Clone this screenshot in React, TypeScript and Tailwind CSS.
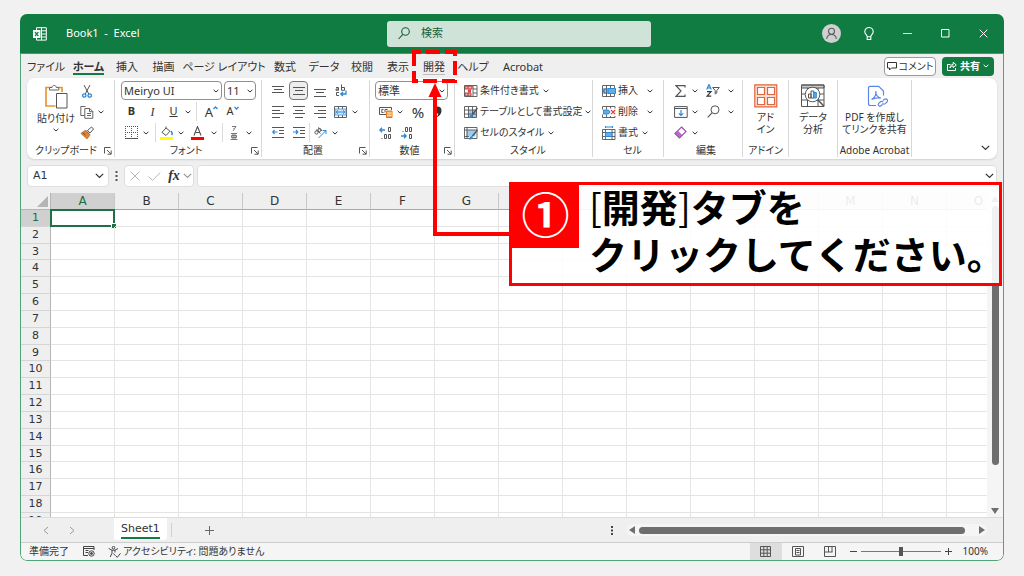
import type { ReactNode } from "react";

const TABS = [
  { name: "ファイル", width: "w-[44px]" },
  { name: "ホーム", width: "w-[41px]" },
  { name: "挿入", width: "w-[36px]" },
  { name: "描画", width: "w-[37px]" },
  { name: "ページ レイアウト", width: "w-[84px]" },
  { name: "数式", width: "w-[38px]" },
  { name: "データ", width: "w-[40px]" },
  { name: "校閲", width: "w-[36px]" },
  { name: "表示", width: "w-[36px]" },
  { name: "開発", width: "w-[36px]" },
  { name: "ヘルプ", width: "w-[42px]" },
  { name: "Acrobat", width: "w-[58px]" },
];

const COLUMNS = "ABCDEFGHIJKLMNO".split("");
const ROWS = Array.from({ length: 19 }, (_, i) => i + 1);

const Chevron = ({ className = "" }: { className?: string }) => (
  <svg className={`shrink-0 ${className}`} width="6" height="4" viewBox="0 0 6 4" fill="none" stroke="currentColor">
    <path d="M.6.8 3 3 5.4.8" />
  </svg>
);

const BigChevron = ({ className = "" }: { className?: string }) => (
  <svg className={`shrink-0 ${className}`} width="9" height="6" viewBox="0 0 9 6" fill="none" stroke="currentColor" strokeWidth="1.2">
    <path d="M.8.8 4.5 4.5 8.2.8" />
  </svg>
);

const Icon = ({ w = 14, h = 14, children }: { w?: number; h?: number; children: ReactNode }) => (
  <svg className="shrink-0" width={w} height={h} viewBox={`0 0 ${w} ${h}`} fill="none" stroke="#555">
    {children}
  </svg>
);

const Tool = ({ label, className = "w-[21px]", children }: { label: string; className?: string; children: ReactNode }) => (
  <button aria-label={label} className={`flex h-[19px] shrink-0 items-center justify-center ${className}`}>
    {children}
  </button>
);

const More = ({ label }: { label: string }) => (
  <Tool label={label} className="w-2">
    <Chevron />
  </Tool>
);

const Row = ({ children }: { children: ReactNode }) => <div className="flex h-[21px] items-center">{children}</div>;

const Split = ({ className = "" }: { className?: string }) => <span className={`h-[19px] w-px bg-[#dcdcdc] ${className}`} />;

const Group = ({
  label,
  className,
  launcher,
  children,
}: {
  label: string;
  className: string;
  launcher?: boolean;
  children: ReactNode;
}) => (
  <section className={`my-0.5 flex shrink-0 flex-col border-r border-[#d8d8d8] ${className}`}>
    <div className="h-[64px]">{children}</div>
    <div className="flex h-[13px] items-center">
      <span className="flex-1 text-center leading-[13px]">{label}</span>
      {launcher && (
        <button aria-label={`${label}の設定`} className="flex w-[10px] justify-start">
          <Icon w={8} h={8}>
            <path d="M.5 6.500v-6h6M3 3l4 4M7.200 3.500v3.700H3.500" />
          </Icon>
        </button>
      )}
    </div>
  </section>
);

const Combo = ({ label, value, className }: { label: string; value: string; className: string }) => (
  <div className={`relative h-[19px] ${className}`}>
    <select
      aria-label={label}
      className="h-full w-full appearance-none rounded border border-[#8f8f8f] bg-white pl-[2px] text-[11px] leading-4"
    >
      <option>{value}</option>
    </select>
    <Chevron className="pointer-events-none absolute top-[8px] right-[3px]" />
  </div>
);

const LabeledTool = ({ label, gap = "gap-1", icon }: { label: string; gap?: string; icon: ReactNode }) => (
  <Row>
    <button className="flex items-center gap-[2px] whitespace-nowrap">
      {icon}
      <span className={`flex items-center ${gap}`}>
        {label}
        <Chevron />
      </span>
    </button>
  </Row>
);

const BigTool = ({ lines, icon }: { lines: string[]; icon: ReactNode }) => (
  <button className="flex w-full flex-col items-center pt-[4px] leading-[12px]">
    {icon}
    <span className="mt-[3px] whitespace-nowrap">
      {lines.map(line => (
        <span key={line} className="block">
          {line}
        </span>
      ))}
    </span>
  </button>
);

const TitleBar = () => (
  <header className="flex h-[40px] shrink-0 items-center border-b border-[#3f9c69] bg-[#107c41] text-white">
    <div className="flex flex-1 items-center gap-[19px] pl-[13px] text-[11px]">
      <svg width="14" height="14" viewBox="0 0 14 14" fill="none" stroke="#fff">
        <path d="M3.500 3V.7h9.800v12.400H3.500V11M8.500.700v12.400M8 3.800h5.300M8 7h5.300M8 10h5.300" />
        <path d="M0 3h7.500v8H0z" fill="#fff" stroke="none" />
        <path d="m2 5 3.400 4.200M5.400 5 2 9.200" stroke="#107c41" strokeWidth="1.200" />
      </svg>
      <span className="whitespace-pre">Book1  -  Excel</span>
    </div>
    <label className="flex h-[26px] w-[264px] items-center gap-[11px] rounded-[3px] bg-[#cfe3d8] pl-[11px] text-[#175e37]">
      <svg width="12" height="13" viewBox="0 0 12 13" fill="none" stroke="currentColor" strokeWidth="1.100">
        <circle cx="7.500" cy="4.500" r="3.800" />
        <path d="M4.800 7.400.6 12" />
      </svg>
      <input
        type="search"
        aria-label="検索"
        placeholder="検索"
        className="min-w-0 flex-1 bg-transparent text-[11px] outline-none placeholder:text-[#175e37]"
      />
    </label>
    <div className="flex w-[353px] justify-end pr-[2px]">
      <Tool label="アカウント" className="w-[38px]">
        <svg width="19" height="19" viewBox="0 0 19 19" fill="none" stroke="#5d5d5d" strokeWidth="1.100">
          <circle cx="9.500" cy="9.500" r="9.500" fill="#d0d0d0" stroke="none" />
          <circle cx="9.500" cy="7.300" r="3" />
          <path d="M4.700 15c.3-3 2.300-4.500 4.800-4.500s4.500 1.500 4.800 4.500" />
        </svg>
      </Tool>
      <Tool label="ヒント" className="w-[38px]">
        <svg width="10" height="14" viewBox="0 0 10 14" fill="none" stroke="#fff" strokeWidth="1.100">
          <path d="M3.200 9.800C3.200 7.800.8 7.500.8 4.700a4.200 4.200 0 0 1 8.400 0c0 2.800-2.400 3.100-2.400 5.100zM3.200 9.800v2.700h3.600V9.800" />
        </svg>
      </Tool>
      <Tool label="最小化" className="w-[38px]">
        <svg width="9" height="9" stroke="#d6eadf">
          <path d="M0 4.500h9" />
        </svg>
      </Tool>
      <Tool label="最大化" className="w-[38px]">
        <svg width="9" height="9" fill="none" stroke="#fff">
          <path d="M.5.500h7.500v7.500H.5z" />
        </svg>
      </Tool>
      <Tool label="閉じる" className="w-[38px]">
        <svg width="9" height="9" stroke="#fff">
          <path d="m.7.700 7.600 7.600M8.300.700.7 8.300" />
        </svg>
      </Tool>
    </div>
  </header>
);

const TabStrip = () => (
  <nav className="flex h-[24px] shrink-0 items-center pr-[9px] pl-[3px] text-[11px]">
    {TABS.map(({ name, width }) => (
      <button key={name} className={`flex h-full shrink-0 justify-center whitespace-nowrap ${width}`}>
        <span
          className={`mt-[4px] h-[17px] leading-[17px] ${
            name === "ホーム" ? "border-b-2 border-[#107c41] font-bold" : name === "開発" ? "border-b border-[#bdbdbd]" : ""
          }`}
        >
          {name}
        </span>
      </button>
    ))}
    <div className="ml-auto flex gap-[6px]">
      <button className="flex h-[19px] w-[52px] items-center justify-center gap-[2px] rounded border border-[#9a9a9a] bg-white whitespace-nowrap">
        <svg className="shrink-0" width="10" height="9" viewBox="0 0 10 9" fill="none" stroke="#333">
          <path d="M.5.500h9v5.500h-5L2.500 8V6h-2z" />
        </svg>
        <span className="text-[10px]">コメント</span>
      </button>
      <button className="flex h-[19px] w-[52px] items-center justify-center gap-[3px] rounded bg-[#107c41] text-[10px] font-bold text-white">
        <svg width="10" height="10" viewBox="0 0 10 10" fill="none" stroke="#fff">
          <path d="M3.500 3.500H.5v6h8V7M3 7c0-2 1-3.500 3.200-3.500V1.200L9.300 4 6.200 6.500V5C4.500 5 3.500 5.500 3 7z" />
        </svg>
        共有
        <Chevron />
      </button>
    </div>
  </nav>
);

const AlignIcon = ({ d }: { d: string }) => (
  <Icon w={12} h={12}>
    <path d={d} />
  </Icon>
);

const GridBase = () => <path d="M.5 1.500h12v11H.5zM.5 5h12M.5 9h12M4.500 1.500v11M8.500 1.500v11" strokeWidth=".9" />;

const Ribbon = () => (
  <div className="mx-[6px] flex h-[81px] shrink-0 rounded-lg bg-white pr-[7px] pl-px shadow-[0_1px_2px_#d0d0d0]">
    <Group label="クリップボード" launcher className="w-[87px]">
      <div className="flex pl-[8px]">
        <button className="flex w-10 flex-col items-center pt-[4px] leading-[12px] whitespace-nowrap">
          <svg width="23" height="25" viewBox="0 0 23 25" fill="none">
            <path d="M6 3.500H1v18.500h9.500M13 3.500h4V8" stroke="#e8953a" strokeWidth="1.700" />
            <path d="M4.500 6V3.500H7C7 .8 11.300.8 11.300 3.500h2.500V6z" fill="#fff" stroke="#666" />
            <path d="M11.500 9.500h10.500v14.500H11.500z" fill="#fff" stroke="#555" />
          </svg>
          <span className="mt-[3px]">貼り付け</span>
          <Chevron className="mt-[4px]" />
        </button>
        <div>
          <Row>
            <Tool label="切り取り">
              <Icon w={10} h={14}>
                <path d="M2 1l4.800 9M8 1 3.200 10" />
                <circle cx="2.300" cy="11.500" r="1.700" stroke="#2b88d8" strokeWidth="1.300" />
                <circle cx="7.700" cy="11.500" r="1.700" stroke="#2b88d8" strokeWidth="1.300" />
              </Icon>
            </Tool>
          </Row>
          <Row>
            <Tool label="コピー">
              <Icon>
                <path d="M4.500 10.500H.8V1.500h4.700M4.800 3.500h5l3 3v6.800h-8zM9.500 3.500v3.200h3.200M7 8.500h4M7 10.500h4" strokeWidth=".9" />
              </Icon>
            </Tool>
            <More label="コピーのオプション" />
          </Row>
          <Row>
            <Tool label="書式のコピー">
              <Icon>
                <path d="m7.500 4.500 4-3.500 2 2-3.500 4z" fill="#fff" />
                <path d="M5 4.500 9.800 9.500 7 13 .8 7.500z" fill="#e5812b" stroke="#b85c12" strokeWidth=".6" />
                <path d="m5.500 4 4.500 4.800M2.500 6.500l3 2.500" />
              </Icon>
            </Tool>
          </Row>
        </div>
      </div>
    </Group>

    <Group label="フォント" launcher className="w-[147px] pl-[6px]">
      <Row>
        <Combo label="フォント名" value="Meiryo UI" className="w-[101px]" />
        <Combo label="フォント サイズ" value="11" className="ml-[2px] w-[32px]" />
      </Row>
      <Row>
        <Tool label="太字">
          <b className="text-[11px]">B</b>
        </Tool>
        <Tool label="斜体">
          <i className="font-['Liberation_Serif'] text-[12px]">I</i>
        </Tool>
        <Tool label="下線">
          <u className="text-[11px]">U</u>
        </Tool>
        <More label="下線のオプション" />
        <Split className="mx-1" />
        <Tool label="フォント サイズの拡大">
          <span className="text-[13px] leading-4">A</span>
          <svg className="mb-2" width="5" height="4" fill="none" stroke="#2b88d8" strokeWidth="1.300">
            <path d="M.5 3 2.500 1l2 2" />
          </svg>
        </Tool>
        <Tool label="フォント サイズの縮小">
          <span className="text-[11px]">A</span>
          <svg className="mb-2" width="5" height="4" fill="none" stroke="#2b88d8" strokeWidth="1.300">
            <path d="m.5 1 2 2 2-2" />
          </svg>
        </Tool>
      </Row>
      <Row>
        <Tool label="罫線">
          <Icon w={13} h={13}>
            <path d="M.5 0v12M6.500 0v12M12.500 0v12M0 .500h13M0 6.500h13" strokeDasharray="1 1" />
            <path d="M0 12.500h13" />
          </Icon>
        </Tool>
        <More label="罫線のオプション" />
        <Split className="ml-[5px]" />
        <Tool label="塗りつぶしの色">
          <Icon w={14} h={14}>
            <path d="M6 2 2 6.300 6 9.500l4-4.300zM6 2V.5" />
            <path d="M10.800 5c1.500 1.500 1.700 3 .7 4" stroke="#2b88d8" strokeWidth="1.500" />
            <path d="M0 11h13v3H0z" fill="#ff0" stroke="none" />
          </Icon>
        </Tool>
        <More label="塗りつぶしの色のオプション" />
        <Tool label="フォントの色" className="w-[25px]">
          <Icon w={13} h={14}>
            <path d="m3 9.500 3.500-9 3.500 9M4.200 6.500h4.600" strokeWidth="1.100" />
            <path d="M0 11h13v3H0z" fill="red" stroke="none" />
          </Icon>
        </Tool>
        <More label="フォントの色のオプション" />
        <Split className="ml-1" />
        <Tool label="ふりがな" className="w-[22px]">
          <Icon w={8} h={14}>
            <path d="M2 .500h4L4.500 2.800M4 2v1.500L3 5M1 7.500h6M1.500 9.500h5v2h-5zM3 7.500v6M5 7.500v6M.5 13.500h7" stroke="#777" />
          </Icon>
        </Tool>
        <More label="ふりがなのオプション" />
      </Row>
    </Group>

    <Group label="配置" launcher className="w-[108px] pl-[5px]">
      <Row>
        <Tool label="上揃え">
          <AlignIcon d="M0 1.500h12M2 4.500h8M0 7.500h12" />
        </Tool>
        <Tool label="上下中央揃え">
          <span className="flex h-[19px] w-[19px] items-center justify-center rounded border border-[#777] bg-[#ededed]">
            <AlignIcon d="M0 2.500h12M2 5.500h8M0 9.500h12" />
          </span>
        </Tool>
        <Tool label="下揃え">
          <AlignIcon d="M0 4.500h12M2 7.500h8M0 11.500h12" />
        </Tool>
        <Tool label="折り返し">
          <Icon w={12} h={13}>
            <path d="M1 3.500h2.500v2.800H1V5h2.500M6.500.500v5.800h3V3.500h-3M4 8.500H1.500v3H4" />
            <path d="M11 6.500v3.500H6M8 8 5.800 10 8 12" stroke="#2b88d8" strokeWidth="1.300" />
          </Icon>
        </Tool>
      </Row>
      <Row>
        <Tool label="左揃え">
          <AlignIcon d="M0 .500h12M0 4.500h8M0 7.500h12M0 11.500h8" />
        </Tool>
        <Tool label="中央揃え">
          <AlignIcon d="M0 .500h12M2 4.500h8M0 7.500h12M2 11.500h8" />
        </Tool>
        <Tool label="右揃え">
          <AlignIcon d="M0 .500h12M4 4.500h8M0 7.500h12M4 11.500h8" />
        </Tool>
        <Tool label="セルを結合して中央揃え">
          <Icon w={13} h={12}>
            <path d="M.5.500h12v11H.5zM4.500.500V3M8.500.500V3M4.500 9v3M8.500 9v3" strokeWidth=".9" />
            <path d="M1 3h11v6H1z" fill="#cfe6f7" stroke="#2b88d8" strokeWidth=".7" />
            <path d="M2 6h9M4 4.300 2.200 6 4 7.700M9 4.300 10.800 6 9 7.700" stroke="#2b88d8" />
          </Icon>
        </Tool>
        <More label="結合のオプション" />
      </Row>
      <Row>
        <Tool label="インデントを減らす">
          <Icon w={12} h={11}>
            <path d="M0 .500h12M7 3.500h5M7 6.500h5M0 10.500h12" />
            <path d="M5.500 5h-5M2.500 3 .7 5l1.800 2" stroke="#2b88d8" strokeWidth="1.200" />
          </Icon>
        </Tool>
        <Tool label="インデントを増やす">
          <Icon w={12} h={11}>
            <path d="M0 .500h12M7 3.500h5M7 6.500h5M0 10.500h12" />
            <path d="M0 5h5M3 3l1.800 2L3 7" stroke="#2b88d8" strokeWidth="1.200" />
          </Icon>
        </Tool>
        <Split />
        <Tool label="方向">
          <Icon w={13} h={12}>
            <circle cx="2.500" cy="5.500" r="1.600" />
            <circle cx="5.500" cy="3" r="1.600" />
            <path d="m2 2.500 4.500 4M4 .500l4 3.500" />
            <path d="m4.500 11 7.500-7.500M8.500 3.500H12V7" stroke="#2b88d8" />
          </Icon>
        </Tool>
        <More label="方向のオプション" />
      </Row>
    </Group>

    <Group label="数値" launcher className="w-[85px] pl-[5px]">
      <Row>
        <Combo label="表示形式" value="標準" className="w-[73px]" />
      </Row>
      <Row>
        <Tool label="通貨">
          <Icon w={14} h={12}>
            <path d="M7 8.500H.5v-7h12V4M4.500 3.500H2.800v3h1.700M8.500 3.500H6v3" />
            <path d="M7.500 5h5.500v6.500H7.500z" fill="#f6a04d" stroke="#e07b1a" />
            <path d="M8 7h5M8 9.300h5" stroke="#fff" strokeWidth=".7" />
          </Icon>
        </Tool>
        <More label="通貨のオプション" />
        <Tool label="パーセント" className="w-7">
          <span className="text-[15px] leading-4">%</span>
        </Tool>
        <Tool label="桁区切り" className="w-3">
          <svg width="8" height="12" viewBox="0 0 8 12" fill="#333">
            <path d="M3.500.500C6 .500 7.500 2 7.500 4.500 7.500 8 5 10.500 2 11.500c1.500-1.500 2.300-2.800 2.300-4C2 7.800.5 6 .5 4S1.700.500 3.500.500z" />
          </svg>
        </Tool>
      </Row>
      <Row>
        <Tool label="小数点以下の表示桁数を増やす">
          <Icon w={13} h={12}>
            <path d="M6 3H.7M3 .8.8 3 3 5.200" stroke="#2b88d8" strokeWidth="1.300" />
            <path d="M9.500.500h2v4h-2zM5.500 7.500h2v4h-2zM9.500 7.500h2v4h-2zM2.500 11.500h1" />
          </Icon>
        </Tool>
        <Tool label="小数点以下の表示桁数を減らす">
          <Icon w={13} h={12}>
            <path d="M1 9h5.300M4 6.800 6.200 9 4 11.200" stroke="#2b88d8" strokeWidth="1.300" />
            <path d="M5.500.500h2v4h-2zM9.500.500h2v4h-2zM9.500 7.500h2v4h-2zM2.500 4.500h1" />
          </Icon>
        </Tool>
      </Row>
    </Group>

    <Group label="スタイル" className="w-[138px] pl-[9px]">
      <LabeledTool
        label="条件付き書式"
        icon={
          <Icon>
            <path d="M1 2h7v3H1zM1 9h6v3H1z" fill="#f3aaa8" stroke="#d9322e" />
            <path d="M4 5.500h3v3H4z" fill="#e0413c" stroke="none" />
            <path d="M.5 1.500h12.500v11H.5zM9 1.500v11M9 5h4M9 9h4M4 1.500v3M4 9v3" strokeWidth=".9" />
          </Icon>
        }
      />
      <LabeledTool
        label="テーブルとして書式設定"
        gap="gap-[2px]"
        icon={
          <Icon>
            <path d="M5 5h8v7H5z" fill="#9ccdf0" stroke="none" />
            <GridBase />
            <path d="m13.500 3-5 6.500" strokeWidth="1.500" />
            <path d="M5 13c.5-2.500 1.500-3.500 3.500-3.500C9.500 12 8 13.500 5 13z" fill="#2b88d8" stroke="none" />
          </Icon>
        }
      />
      <LabeledTool
        label="セルのスタイル"
        icon={
          <Icon>
            <path d="M2.500 4h9v6.500h-9z" fill="#9ccdf0" stroke="none" />
            <path d="M.5 1.500h12.500v11H.5zM3 1.500v11M.5 4H13M.5 10.500H5" strokeWidth=".9" />
            <path d="m13.500 4-5 6" strokeWidth="1.500" />
            <path d="M5 13.500c.5-2.500 1.500-3.500 3.500-3.500 1 2.500-.5 4-3.500 3.500z" fill="#2b88d8" stroke="none" />
          </Icon>
        }
      />
    </Group>

    <Group label="セル" className="w-[71px] pl-[9px]">
      <LabeledTool
        label="挿入"
        gap="gap-[9px]"
        icon={
          <Icon>
            <GridBase />
            <path d="M6 4.500h7.500v5H6z" fill="#5fb0ea" stroke="#2b88d8" />
            <path d="M6.500 7H1M3.500 4.500 1 7l2.500 2.500" stroke="#2b88d8" strokeWidth="1.200" />
          </Icon>
        }
      />
      <LabeledTool
        label="削除"
        gap="gap-[9px]"
        icon={
          <Icon>
            <path d="M13 3.500v-2H.5v3M13 11v1.500H.5v-3M4.500 1.500v3M8.500 1.500v2M4.500 9.500v3M8.500 11v1.500" strokeWidth=".9" />
            <path d="M1.500 5h5L8 7 6.500 9h-5z" fill="#5fb0ea" stroke="#2b88d8" />
            <path d="m9 5 4.200 4.200M13.200 5 9 9.200" stroke="#e0413c" strokeWidth="1.200" />
          </Icon>
        }
      />
      <LabeledTool
        label="書式"
        icon={
          <Icon>
            <path d="M.5 3.500h12.500v10H.5zM.5 6.500H13M.5 10.500H13M3.500 3.500v10M10 3.500v10" strokeWidth=".9" />
            <path d="M3.500 6.500H10v4H3.500z" fill="#5fb0ea" stroke="#2b88d8" />
            <path d="M3 1h8M3.500 0v2M10.500 0v2" stroke="#2b88d8" />
          </Icon>
        }
      />
    </Group>

    <Group label="編集" className="w-[79px] pl-[6px]">
      <Row>
        <Tool label="オート SUM">
          <Icon w={11} h={12}>
            <path d="M10 2.500V.6H1L6 6l-5 5.400h9V9.500" strokeWidth="1.200" />
          </Icon>
        </Tool>
        <More label="オート SUM のオプション" />
        <Tool label="並べ替えとフィルター" className="w-[28px]">
          <Icon w={14} h={13}>
            <path d="M.7 5.500 3 .500l2.300 5M1.500 4h3" stroke="#2b88d8" strokeWidth="1.200" />
            <path d="M1 7.700h4L1 12.200h4.200" stroke="#333" strokeWidth="1.200" />
            <path d="M6.700 3.500h6.600l-2.500 3V9L9.200 10V6.500z" />
          </Icon>
        </Tool>
        <More label="並べ替えのオプション" />
      </Row>
      <Row>
        <Tool label="フィル">
          <Icon w={14} h={12}>
            <path d="M.6.600h12.600v10.800H.6zM.6 2.500h12.600" />
            <path d="M7 4v5.500M4.800 7.300 7 9.500l2.200-2.200" stroke="#2b88d8" strokeWidth="1.200" />
          </Icon>
        </Tool>
        <More label="フィルのオプション" />
        <Tool label="検索と選択" className="w-[28px]">
          <Icon w={13} h={13}>
            <circle cx="8" cy="4.800" r="4" />
            <path d="M5 7.800.7 12.300" strokeWidth="1.200" />
          </Icon>
        </Tool>
        <More label="検索のオプション" />
      </Row>
      <Row>
        <Tool label="クリア">
          <Icon w={13} h={13}>
            <path d="M7.500 1 12 5.500 5.500 12 1 7.500z" fill="#fff" stroke="#a24fb5" strokeWidth="1.200" />
            <path d="m3.500 5 4.500 4.500-2.500 2.500L1 7.500z" fill="#b66cc6" stroke="#a24fb5" />
          </Icon>
        </Tool>
        <More label="クリアのオプション" />
      </Row>
    </Group>

    <Group label="アドイン" className="w-[46px]">
      <BigTool
        lines={["アド", "イン"]}
        icon={
          <svg width="24" height="24" viewBox="0 0 24 24" fill="#fff" stroke="#e0643c">
            <path d="M.8.800h22v22H.8z" fill="#fbdccf" strokeWidth="1.200" />
            <path d="M3.500 3.500h7v7h-7zM13.500 3.500h7v7h-7zM3.500 13.500h7v7h-7zM13.500 13.500h7v7h-7z" strokeWidth="1.200" />
          </svg>
        }
      />
    </Group>

    <Group label="" className="w-[49px]">
      <BigTool
        lines={["データ", "分析"]}
        icon={
          <svg width="24" height="24" viewBox="0 0 24 24" fill="none" stroke="#555">
            <path d="M.5 1h22.500v3H.5z" fill="#ccc" />
            <path d="M.5 1h22.500v21.500H.5zM.5 10h22.500M.5 16h22.500M6.500 4v18.500M17 4v18.500" />
            <circle cx="11.500" cy="10.500" r="7.300" fill="#fff" />
            <path d="m16.800 15.800 6 6.200" strokeWidth="1.600" />
            <path d="M7.500 10h2.500v4H7.500zM10 7h2.800v7H10z" />
            <path d="M12.800 8.500h2.500V14h-2.500z" fill="#5fb0ea" stroke="#2b88d8" />
          </svg>
        }
      />
    </Group>

    <Group label="Adobe Acrobat" className="w-[74px] whitespace-nowrap">
      <BigTool
        lines={["PDF を作成し", "てリンクを共有"]}
        icon={
          <svg className="ml-[6px]" width="22" height="24" viewBox="0 0 22 24" fill="none" stroke="#5b87e8" strokeWidth="1.200">
            <path d="M9 21.500H3.200a1.700 1.700 0 0 1-1.700-1.700V4c0-1 .7-1.700 1.700-1.700h8.500l4.800 4.800v4.500" />
            <path d="M4.500 15.500c3-1.500 4.700-5 4.300-8.500 0 4 1.700 6.500 5 7.200-3.300-.7-6.300-.2-9.300 1.300z" />
            <path d="m16 16.500 1.500-1.200c2-1.300 4 1 2.500 2.700l-1.800 1.600c-1 .8-2 .6-2.700-.2M15.500 20.500 14 21.700c-1.800 1.500-3.700-.7-2.300-2.400l1.700-1.500c1-.7 2-.5 2.700.3" />
          </svg>
        }
      />
    </Group>
    <button aria-label="リボンを折りたたむ" className="mt-auto mb-[8px] ml-auto">
      <BigChevron />
    </button>
  </div>
);

const FormulaBar = () => (
  <div className="flex h-[34px] shrink-0 items-start px-[6px] pt-[6px]">
    <div className="flex h-[22px] w-[82px] items-center rounded border border-[#dedede] bg-white pr-[4px] pl-[5px]">
      <input
        aria-label="名前ボックス"
        defaultValue="A1"
        className="min-w-0 flex-1 bg-transparent font-['DejaVu_Sans'] text-[11px] outline-none"
      />
      <BigChevron />
    </div>
    <svg className="mx-[6px] mt-[6px]" width="3" height="11" fill="#555">
      <path d="M.5 0h2v2h-2zM.5 4h2v2h-2zM.5 8h2v2h-2z" />
    </svg>
    <div className="flex h-[22px] w-[70px] items-center rounded border border-[#dedede] bg-white pl-[5px]">
      <Tool label="キャンセル" className="w-[10px]">
        <svg width="10" height="10" stroke="#b5b5b5">
          <path d="m.5.500 9 9M9.500.500l-9 9" />
        </svg>
      </Tool>
      <Tool label="入力" className="ml-[8px] w-[13px]">
        <svg width="13" height="9" fill="none" stroke="#b5b5b5">
          <path d="M.5 4.500 4.500 8.300 12.300.600" />
        </svg>
      </Tool>
      <Tool label="関数の挿入" className="ml-[7px] w-[12px]">
        <i className="font-['Liberation_Serif'] text-[14px] leading-4 font-bold">fx</i>
      </Tool>
      <BigChevron className="ml-[3px] text-[#999]" />
    </div>
    <div className="ml-[3px] flex h-[22px] flex-1 items-center rounded border border-[#dedede] bg-white pr-[2px] pl-1">
      <input aria-label="数式バー" className="min-w-0 flex-1 bg-transparent outline-none" />
      <BigChevron />
    </div>
  </div>
);

const Sheet = () => (
  <div className="flex min-h-0 flex-1 overflow-hidden">
    <div className="min-w-0 flex-1 overflow-hidden font-['DejaVu_Sans'] text-[11px]">
      <table className="h-[337px] w-[990px] table-fixed border-separate border-spacing-0 bg-white">
        <thead>
          <tr className="h-[17px] bg-[#efefef]">
            <th aria-label="すべて選択" className="w-[30px] border-r border-b border-[#b5b5b5] p-0">
              <svg className="mr-[2px] ml-auto" width="11" height="11" fill="#b5b5b5">
                <path d="M11 0v11H0z" />
              </svg>
            </th>
            {COLUMNS.map(name => (
              <th
                key={name}
                className={`w-[64px] border-r border-b border-r-[#c8c8c8] border-b-[#a8a8a8] p-0 text-[12px] leading-4 font-normal ${
                  name === "A" ? "bg-[#d0d0d0] text-[#1e6c41]" : ""
                }`}
              >
                {name}
              </th>
            ))}
          </tr>
        </thead>
        <tbody>
          {ROWS.map(row => (
            <tr key={row}>
              <th
                className={`border-r border-b border-r-[#b5b5b5] border-b-[#d5d5d5] p-0 leading-[14px] font-normal ${
                  row === 1 ? "bg-[#d0d0d0] text-[#1e6c41]" : "bg-[#efefef]"
                }`}
              >
                {row}
              </th>
              {COLUMNS.map(col => (
                <td key={col} className="relative border-r border-b border-[#e4e4e4] p-0">
                  {row === 1 && col === "A" && (
                    <span className="absolute -inset-px border-2 border-[#1e7145]">
                      <span className="absolute -right-[3px] -bottom-[3px] h-[5px] w-[5px] border-t border-l border-white bg-[#1e7145]" />
                    </span>
                  )}
                </td>
              ))}
            </tr>
          ))}
        </tbody>
      </table>
    </div>
    <div className="flex w-[16px] flex-col items-center bg-[#f5f5f5] py-[3px] text-[#6e6e6e]">
      <svg width="8" height="6" fill="currentColor">
        <path d="M4 0 8 6H0z" />
      </svg>
      <span className="mt-1 w-[7px] flex-1 rounded-full bg-[#6e6e6e]" />
      <svg className="mt-[43px]" width="8" height="6" fill="currentColor">
        <path d="M0 0h8L4 6z" />
      </svg>
    </div>
  </div>
);

const SheetTabs = () => (
  <div className="flex h-[25px] shrink-0 items-center border-t border-[#dcdcdc] pr-[16px] pl-[22px]">
    <button aria-label="前のシート">
      <svg width="6" height="9" fill="none" stroke="#999">
        <path d="M5 1 1 4.500 5 8" />
      </svg>
    </button>
    <button aria-label="次のシート" className="ml-[20px]">
      <svg width="6" height="9" fill="none" stroke="#999">
        <path d="m1 1 4 3.500L1 8" />
      </svg>
    </button>
    <button className="ml-[39px] h-[22px] self-start rounded-b-[3px] bg-white px-[7px] font-['DejaVu_Sans'] text-[11px]">
      <span className="block h-[20px] border-b-2 border-[#107c41] leading-[20px]">Sheet1</span>
    </button>
    <span className="ml-[4px] h-[14px] w-px bg-[#cfcfcf]" />
    <button aria-label="新しいシート" className="ml-[33px]">
      <svg width="9" height="9" stroke="#666">
        <path d="M0 4.500h9M4.500 0v9" />
      </svg>
    </button>
    <svg className="ml-auto" width="2" height="9" fill="#444">
      <path d="M0 0h2v2H0zM0 3.500h2v2H0zM0 7h2v2H0z" />
    </svg>
    <div className="ml-[14px] flex h-[12px] w-[360px] items-center rounded-full bg-[#f5f5f5] px-[2px] text-[#6e6e6e]">
      <svg width="6" height="8" fill="currentColor">
        <path d="M6 0v8L0 4z" />
      </svg>
      <span className="mr-[14px] ml-[4px] h-[7px] flex-1 rounded-full bg-[#6e6e6e]" />
      <svg width="6" height="8" fill="currentColor">
        <path d="M0 0v8l6-4z" />
      </svg>
    </div>
  </div>
);

const StatusBar = () => (
  <footer className="flex h-[18px] shrink-0 items-center border-t border-[#cdcdcd] bg-[#f5f5f5] pr-[15px] pl-[8px] whitespace-nowrap">
    <span>準備完了</span>
    <svg className="ml-[14px]" width="12" height="11" viewBox="0 0 12 11" fill="none" stroke="#444">
      <path d="M5 9.500H.5v-9h10.500V4M.5 2.500H11M2.500 4.500h3M2.500 6.500H5" />
      <circle cx="8.500" cy="7.500" r="2.700" />
      <circle cx="8.500" cy="7.500" r="1" fill="#444" />
    </svg>
    <button className="ml-[13px] flex items-center gap-[2px]">
      <svg width="13" height="12" viewBox="0 0 13 12" fill="none" stroke="#444">
        <circle cx="5.500" cy="1.700" r="1.300" />
        <path d="M.8 2.500 4 4.200v3L2.200 11M10 2.500 7 4.200v2.300M4 4.200h3M5.500 7.500 7 9.500M7.500 9.500l1.800 1.800 3.200-4" />
      </svg>
      アクセシビリティ: 問題ありません
    </button>
    <div className="ml-auto flex h-full items-center">
      <button aria-label="標準" className="flex h-full w-[32px] items-center justify-center bg-[#dedede]">
        <Icon w={11} h={11}>
          <path d="M.5.500h10v10H.5zM.5 3.800h10M.5 7.200h10M3.800.500v10M7.200.500v10" />
        </Icon>
      </button>
      <button aria-label="ページ レイアウト" className="flex w-[32px] justify-center">
        <Icon w={12} h={11}>
          <path d="M.5.500h11v10H.5zM3.500 2.500h5v6.500h-5zM4.500 4.500h3M4.500 6.500h3" />
        </Icon>
      </button>
      <button aria-label="改ページ プレビュー" className="flex w-[32px] justify-center">
        <Icon w={12} h={11}>
          <path d="M.5.500h11v10H.5zM4.500.500v5.500M.5 6h8M8 .500V6" />
        </Icon>
      </button>
      <button aria-label="縮小" className="ml-[4px]">
        <svg width="7" height="7" stroke="#444">
          <path d="M0 3.500h7" />
        </svg>
      </button>
      <input
        type="range"
        aria-label="ズーム"
        defaultValue={50}
        className="mx-[4px] h-px w-[80px] appearance-none bg-[#777] [&::-webkit-slider-thumb]:h-[9px] [&::-webkit-slider-thumb]:w-[4px] [&::-webkit-slider-thumb]:appearance-none [&::-webkit-slider-thumb]:bg-[#555]"
      />
      <button aria-label="拡大" className="mr-[11px]">
        <svg width="7" height="7" stroke="#444">
          <path d="M0 3.500h7M3.500 0v7" />
        </svg>
      </button>
      <span>100%</span>
    </div>
  </footer>
);

// Step marker: dashed frame round the tab, arrow and the instruction box
const Callout = () => (
  <div className="pointer-events-none absolute inset-0">
    <svg className="absolute top-[34px] left-[390px]" width="102" height="192" fill="none" stroke="red">
      <path d="M4 4h41v29H4z" strokeWidth="4" strokeDasharray="14 5" strokeDashoffset="7" />
      <path d="M2 2h4v6H2z" fill="red" stroke="none" />
      <path d="M25 48v138h76" strokeWidth="4" />
      <path d="m25 35 6.500 14h-13z" fill="red" stroke="none" />
    </svg>
    <div className="absolute top-[168px] left-[489px] flex h-[104px] w-[493px] border-[3px] border-[#f00] bg-white/90 text-black">
      <span className="flex h-[63px] w-[67px] shrink-0 items-start justify-center bg-[#f00] font-['Noto_Sans_CJK_JP'] text-[48px] leading-[54px] font-bold text-white">
        ①
      </span>
      <p className="-mt-[3px] ml-[10px] font-['Noto_Sans_CJK_JP'] text-[38px] leading-[47px] font-bold whitespace-nowrap [font-feature-settings:normal]">
        <span className="font-normal">[</span>開発<span className="font-normal">]</span>タブを
        <br />
        クリックしてください。
      </p>
    </div>
  </div>
);

const App = () => {
  return (
    <div
      lang="ja"
      className="flex h-screen flex-col bg-[#f1f1f1] px-5 pt-[14px] pb-[15px] font-['Noto_Sans','Noto_Sans_CJK_JP',sans-serif] text-[10px] text-[#333] [font-feature-settings:'palt']"
    >
      <div className="relative min-h-0 flex-1">
        <div className="flex h-full flex-col overflow-hidden rounded-[7px]">
          <TitleBar />
          <main className="flex min-h-0 flex-1 flex-col overflow-hidden rounded-b-[7px] border-x border-b border-[#4fa577] bg-[#efefef]">
            <TabStrip />
            <Ribbon />
            <FormulaBar />
            <Sheet />
            <SheetTabs />
            <StatusBar />
          </main>
        </div>
        <Callout />
      </div>
    </div>
  );
};

export default App;
